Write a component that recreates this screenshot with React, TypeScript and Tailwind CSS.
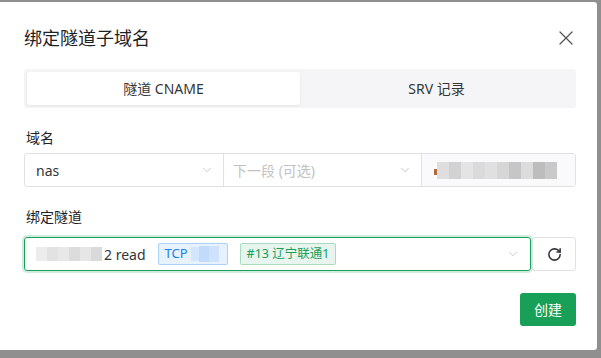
import { ChevronDown, RotateCw, X } from "lucide-react";

const font = { fontFamily: '"Noto Sans", "Noto Sans CJK SC", sans-serif' };

// mosaic blocks standing in for the redacted text
function Mosaic({ shades, w = "w-[12px]", h = "h-[14px]" }: { shades: string[]; w?: string; h?: string }) {
  return (
    <div className="flex items-center">
      {shades.map((c, i) => (
        <div key={i} className={`${w} ${h} ${c}`} />
      ))}
    </div>
  );
}

export default function App() {
  return (
    <div className="w-[601px] h-[358px] bg-[#8f8f8f] overflow-hidden" style={font}>
      <div className="mt-[2px] w-[597px] h-[348px] bg-white rounded-r-[3px] pl-6 pr-[21px] pt-[25px] flex flex-col">
        <div className="flex items-center justify-between h-[22px]">
          <span className="text-[18px] text-[#1f2225] leading-none">绑定隧道子域名</span>
          <X className="w-[24px] h-[24px] text-[#555] -mr-[2px]" strokeWidth={1.25} />
        </div>

        <div className="mt-[20px] h-[39px] bg-[#f5f5f7] rounded-[3px] p-[3px] flex">
          <div className="flex-1 bg-white rounded-[3px] shadow-[0_1px_3px_rgba(0,0,0,0.08)] flex items-center justify-center text-[14px] text-[#333639]">
            隧道 CNAME
          </div>
          <div className="flex-1 flex items-center justify-center text-[14px] text-[#333639]">
            SRV 记录
          </div>
        </div>

        <div className="mt-[20px] pl-[2px] text-[14px] text-[#1f2225] leading-[20px]">域名</div>
        <div className="mt-[5px] h-[34px] flex border border-[#e0e0e6] rounded-[3px] text-[14px]">
          <div className="w-[199px] flex items-center justify-between pl-[11px] pr-[9px] border-r border-[#e0e0e6] text-[#333639]">
            <span>nas</span>
            <ChevronDown className="w-[14px] h-[14px] text-[#c2c2c2]" strokeWidth={1.5} />
          </div>
          <div className="w-[198px] flex items-center justify-between pl-[9px] pr-[9px] border-r border-[#e0e0e6] text-[#c2c2c2]">
            <span>下一段 (可选)</span>
            <ChevronDown className="w-[14px] h-[14px] text-[#c2c2c2]" strokeWidth={1.5} />
          </div>
          <div className="flex-1 bg-[#fafafc] flex items-center pl-[12px]">
            <div className="w-[3px] h-[6px] bg-[#b06a3a] mt-[4px]" />
            <Mosaic
              h="h-[17px]"
              shades={["bg-[#dedede]", "bg-[#d2d2d2]", "bg-[#e4e4e4]", "bg-[#dadada]", "bg-[#e0e0e0]", "bg-[#d6d6d6]", "bg-[#c6c6c6]", "bg-[#dcdcdc]", "bg-[#bdbdbd]", "bg-[#c9c9c9]"]}
            />
          </div>
        </div>

        <div className="mt-[20px] pl-[2px] text-[14px] text-[#1f2225] leading-[20px]">绑定隧道</div>
        <div className="mt-[10px] h-[34px] flex gap-[1px]">
          <div className="flex-1 flex items-center border border-[#18a058] rounded-[3px] shadow-[0_0_0_2px_rgba(24,160,88,0.2)] pl-[11px] pr-[10px] text-[14px]">
            <Mosaic w="w-[11px]" shades={["bg-[#ececec]", "bg-[#e2e2e2]", "bg-[#e8e8e8]", "bg-[#dcdcdc]", "bg-[#e6e6e6]", "bg-[#dadada]"]} />
            <span className="text-[#333639] ml-[2px]">2 read</span>
            <div className="ml-[12px] h-[22px] flex items-center border border-[rgba(32,128,240,0.3)] bg-[rgba(32,128,240,0.1)] rounded-[2px] pl-[6px] text-[13px] text-[#2080f0]">
              <span>TCP</span>
              <div className="ml-[3px] flex items-center">
                <div className="w-[8px] h-[14px] bg-[#d4e6fc]" />
                <div className="w-[10px] h-[16px] bg-[#c3dbfb]" />
                <div className="w-[10px] h-[16px] bg-[#cfe2fc]" />
                <div className="w-[8px] h-[14px] bg-[#e6f0fe]" />
              </div>
            </div>
            <div className="ml-[12px] h-[22px] flex items-center border border-[rgba(24,160,88,0.3)] bg-[rgba(24,160,88,0.1)] rounded-[2px] px-[6px] text-[12.5px] text-[#18a058]">
              #13 辽宁联通1
            </div>
            <ChevronDown className="ml-auto w-[14px] h-[14px] text-[#c2c2c2]" strokeWidth={1.5} />
          </div>
          <div className="w-[44px] flex items-center justify-center border border-[#e0e0e6] rounded-[3px]">
            <RotateCw className="w-[15px] h-[15px] text-[#333639]" strokeWidth={2.5} />
          </div>
        </div>

        <div className="mt-[22px] flex justify-end">
          <div className="w-[56px] h-[33px] bg-[#18a058] rounded-[3px] flex items-center justify-center text-[14px] text-white">
            创建
          </div>
        </div>
      </div>
    </div>
  );
}
